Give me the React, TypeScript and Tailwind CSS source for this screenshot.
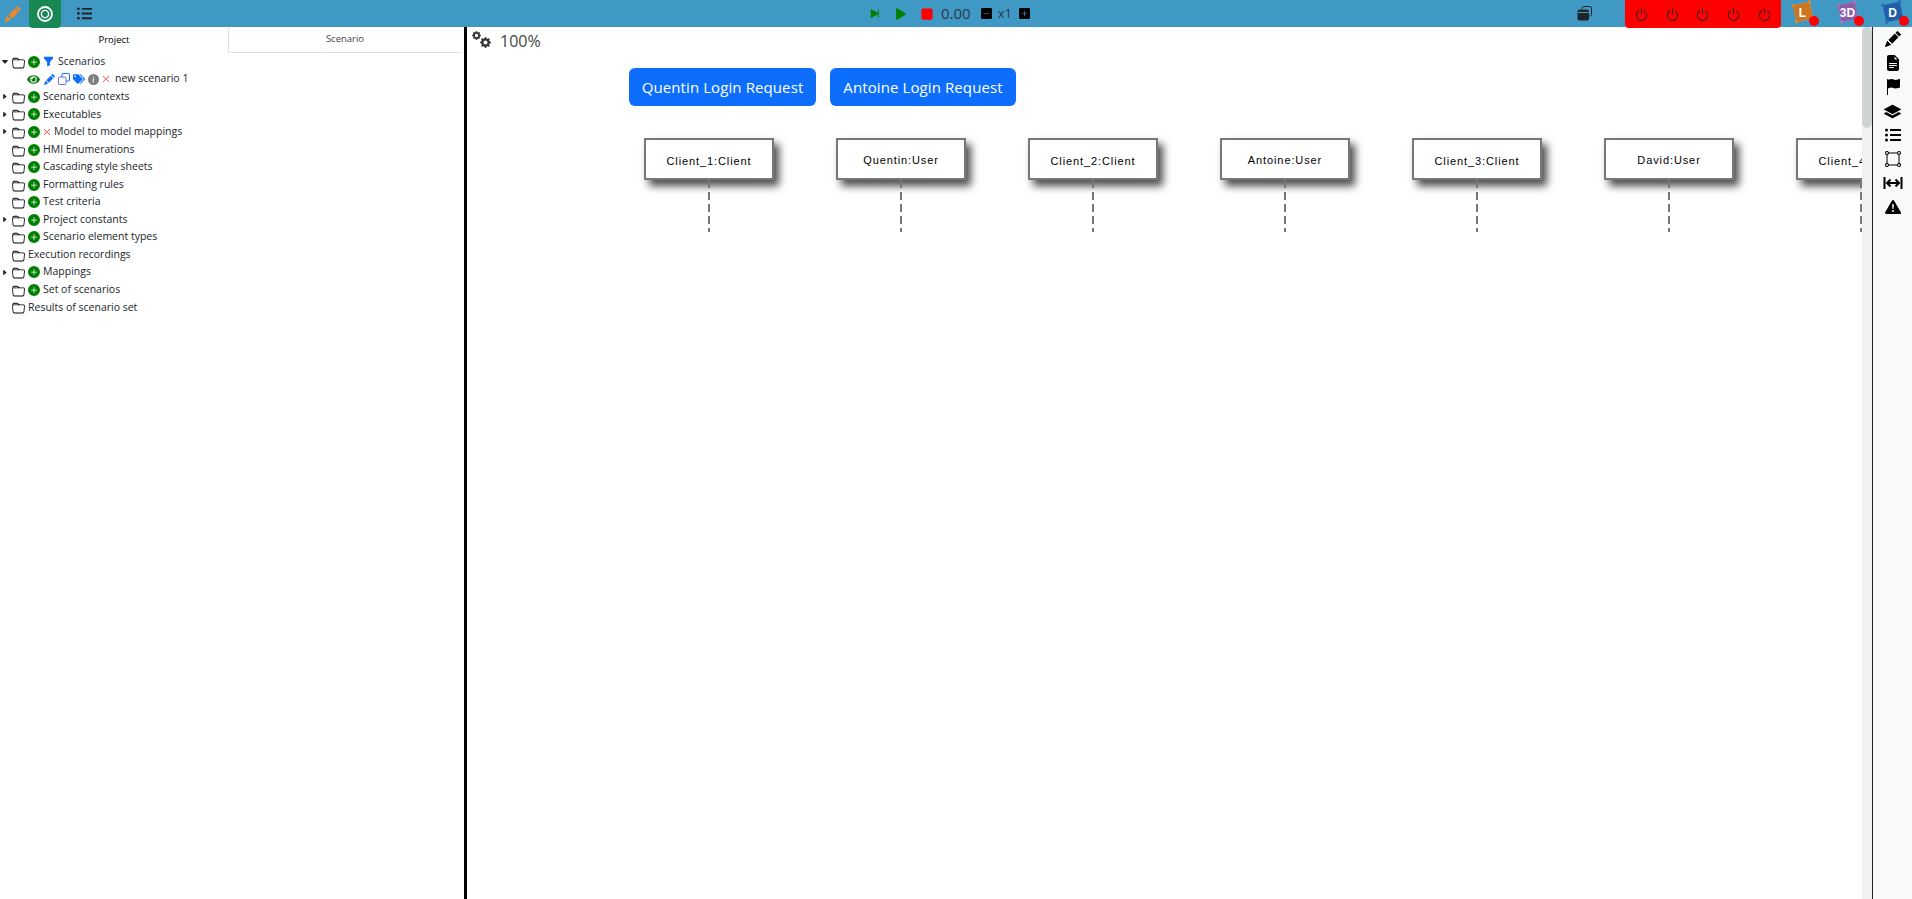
import React from 'react';
import {
  BsPencilFill, BsFolder, BsPlusCircleFill, BsCaretRightFill, BsCaretDownFill,
  BsInfoCircleFill, BsPower, BsFileEarmarkTextFill, BsFlagFill, BsLayersFill,
  BsBoundingBoxCircles, BsExclamationTriangleFill, BsDashSquareFill, BsPlusSquareFill,
  BsFunnelFill, BsPlayFill, BsSkipEndFill, BsStopFill, BsGearFill, BsXLg,
} from 'react-icons/bs';
import { FaEye, FaListUl, FaTags } from 'react-icons/fa';

const sans = { fontFamily: '"Open Sans", sans-serif' };

type TreeItem = {
  label: string;
  caret?: 'right' | 'down';
  plus?: boolean;
  cross?: boolean;
  filter?: boolean;
};

const treeTop: TreeItem[] = [{ label: 'Scenarios', caret: 'down', plus: true, filter: true }];

const treeRest: TreeItem[] = [
  { label: 'Scenario contexts', caret: 'right', plus: true },
  { label: 'Executables', caret: 'right', plus: true },
  { label: 'Model to model mappings', caret: 'right', plus: true, cross: true },
  { label: 'HMI Enumerations', plus: true },
  { label: 'Cascading style sheets', plus: true },
  { label: 'Formatting rules', plus: true },
  { label: 'Test criteria', plus: true },
  { label: 'Project constants', caret: 'right', plus: true },
  { label: 'Scenario element types', plus: true },
  { label: 'Execution recordings' },
  { label: 'Mappings', caret: 'right', plus: true },
  { label: 'Set of scenarios', plus: true },
  { label: 'Results of scenario set' },
];

const lifelines = [
  { name: 'Client_1:Client', user: false },
  { name: 'Quentin:User', user: true },
  { name: 'Client_2:Client', user: false },
  { name: 'Antoine:User', user: true },
  { name: 'Client_3:Client', user: false },
  { name: 'David:User', user: true },
  { name: 'Client_4:Client', user: false },
];

function TreeRow({ item }: { item: TreeItem }) {
  return (
    <div className="flex h-[17.55px] items-center whitespace-nowrap">
      <span className="flex w-[12px] shrink-0 items-center pl-px text-[#212529]">
        {item.caret === 'right' && <BsCaretRightFill size={7} />}
        {item.caret === 'down' && <BsCaretDownFill size={8} />}
      </span>
      <BsFolder size={13} className="mt-[3px] shrink-0 text-black" />
      {item.plus && <BsPlusCircleFill size={12} className="ml-[3px] shrink-0 text-[#008000]" />}
      {item.filter && <BsFunnelFill size={11} className="ml-[3px] shrink-0 text-[#0d6efd]" />}
      {item.cross && <BsXLg size={8} className="ml-[3px] shrink-0 text-[#ff0000]" />}
      <span className={item.filter ? 'ml-[4px]' : 'ml-[3px]'}>{item.label}</span>
    </div>
  );
}

function CopyIcon() {
  return (
    <svg width="12" height="12" viewBox="0 0 12 12" fill="none" className="ml-[3px] shrink-0">
      <rect x="4" y="0.5" width="7.5" height="7.5" rx="0.8" stroke="#0d6efd" />
      <rect x="0.5" y="4" width="7.5" height="7.5" rx="0.8" stroke="#6f6ff0" fill="#fff" />
    </svg>
  );
}

function ScenarioRow() {
  return (
    <div className="flex h-[17.55px] items-center whitespace-nowrap pl-[27px]">
      <FaEye size={13} className="shrink-0 text-[#0a7a0a]" />
      <BsPencilFill size={11} className="ml-[4px] shrink-0 text-[#0d6efd]" />
      <CopyIcon />
      <FaTags size={12} className="ml-[3px] shrink-0 text-[#0d6efd]" />
      <BsInfoCircleFill size={11} className="ml-[3px] shrink-0 text-[#7d7d7d]" />
      <BsXLg size={8} className="ml-[3px] shrink-0 text-[#ff0000]" />
      <span className="ml-[5px]">new scenario 1</span>
    </div>
  );
}

function ToolLogo({ label, fill, edge }: { label: string; fill: string; edge: string }) {
  return (
    <div className="relative flex h-[27px] w-[45px] items-center justify-center">
      <svg width="26" height="26" viewBox="0 0 26 26" className="absolute left-[9px] -top-[1px]">
        <g transform="rotate(-12 13 13)">
          <rect x="4.5" y="4.5" width="17" height="17" fill={fill} stroke={edge} strokeWidth="1" strokeDasharray="2 1" />
          <rect x="3" y="3" width="3" height="3" fill={edge} />
          <rect x="20" y="3" width="3" height="3" fill={edge} />
          <rect x="3" y="20" width="3" height="3" fill={edge} />
          <rect x="20" y="20" width="3" height="3" fill={edge} />
        </g>
      </svg>
      <span className="relative -ml-[2px] -mt-[2px] text-[12px] font-bold leading-none text-white" style={{ fontFamily: '"Liberation Sans", sans-serif' }}>
        {label}
      </span>
      <span className="absolute left-[28px] top-[16px] h-[10px] w-[10px] rounded-full bg-[#ff0000]" />
    </div>
  );
}

function TargetIcon() {
  return (
    <svg width="16" height="16" viewBox="0 0 16 16" fill="none" stroke="#fff">
      <circle cx="8" cy="8" r="7" strokeWidth="1.8" />
      <circle cx="8" cy="8" r="3.6" strokeWidth="1.4" />
    </svg>
  );
}

function StackIcon() {
  return (
    <svg width="15" height="15" viewBox="0 0 15 15" fill="none">
      <path d="M5 2.8V2a1.5 1.5 0 0 1 1.5-1.5H13A1.5 1.5 0 0 1 14.5 2v6.5A1.5 1.5 0 0 1 13 10h-.5" stroke="#212529" />
      <rect x="0.5" y="3.5" width="11.5" height="11" rx="2" fill="#212529" />
      <path d="M1 6.5h10.5" stroke="#4098c4" />
    </svg>
  );
}

function SpacingIcon() {
  return (
    <svg width="20" height="16" viewBox="0 0 20 16" fill="none" stroke="#000" strokeWidth="2">
      <path d="M1.5 2v12M18.5 2v12" />
      <path d="M4.5 8h11" />
      <path d="M7.5 4.5 4 8l3.5 3.5M12.5 4.5 16 8l-3.5 3.5" />
    </svg>
  );
}

function SideIcon({ children }: { children: React.ReactNode }) {
  return <div className="flex h-6 items-center justify-center text-black">{children}</div>;
}

export default function App() {
  return (
    <div className="flex h-screen w-full flex-col overflow-hidden bg-white text-[#212529]" style={sans}>
      {/* Top bar */}
      <div className="flex h-[27px] shrink-0 items-start bg-[#4098c4]">
        <div className="flex w-[870px] shrink-0 items-start">
          <div className="ml-[5px] flex h-[27px] items-center">
            <BsPencilFill size={16} className="text-[#e8892b]" />
          </div>
          <div className="ml-[8px] flex h-[28px] w-[32px] items-center justify-center rounded-b bg-[#198754]">
            <TargetIcon />
          </div>
          <div className="ml-[16px] flex h-[27px] items-center">
            <FaListUl size={15} className="text-[#212529]" />
          </div>
        </div>
        <div className="flex h-[27px] items-center">
          <BsSkipEndFill size={15} className="-ml-[3px] text-[#008000]" />
          <BsPlayFill size={20} className="ml-[9px] text-[#008000]" />
          <BsStopFill size={20} className="ml-[6px] text-[#ff0000]" />
          <span className="ml-[4px] text-[15px] text-[#2b3a4a]">0.00</span>
          <BsDashSquareFill size={11} className="ml-[10px] text-black" />
          <span className="ml-[6px] text-[13px] text-[#2b3a4a]">x1</span>
          <BsPlusSquareFill size={11} className="ml-[7px] text-black" />
        </div>
        <div className="-mr-[4px] ml-auto flex items-start">
          <div className="flex h-[27px] items-center">
            <StackIcon />
          </div>
          <div className="ml-[33px] flex h-[28px] w-[156px] items-center justify-around rounded-b bg-[#ff0000] px-[1px] text-[#212529]">
            <BsPower size={15} />
            <BsPower size={15} />
            <BsPower size={15} />
            <BsPower size={15} />
            <BsPower size={15} />
          </div>
          <ToolLogo label="L" fill="#c9761f" edge="#d98a35" />
          <ToolLogo label="3D" fill="#8d5ca6" edge="#a274b8" />
          <ToolLogo label="D" fill="#1f5fa8" edge="#2a6bb5" />
        </div>
      </div>

      <div className="flex min-h-0 flex-1">
        {/* Project tree */}
        <div className="w-[464px] shrink-0 text-[10.5px]">
          <div className="flex h-[26px] w-[461px]">
            <div className="flex w-[229px] items-center justify-center rounded-tr border-r border-[#dee2e6] text-[9.5px] text-black">
              Project
            </div>
            <div className="flex flex-1 items-center justify-center border-b border-[#dee2e6] text-[9.5px] text-[#444]">
              Scenario
            </div>
          </div>
          <div>
            {treeTop.map((item) => (
              <TreeRow key={item.label} item={item} />
            ))}
            <ScenarioRow />
            {treeRest.map((item) => (
              <TreeRow key={item.label} item={item} />
            ))}
          </div>
        </div>

        {/* Sequence canvas */}
        <div className="min-w-0 flex-1 overflow-hidden border-l-[3px] border-black">
          <div className="flex h-[27px] items-center pl-[5px]">
            <div className="flex w-[19px] items-start text-[#333]">
              <BsGearFill size={9} className="-mt-[3px]" />
              <BsGearFill size={11} className="-ml-px mt-[3px]" />
            </div>
            <span className="ml-[9px] text-[16px] text-[#444]">100%</span>
          </div>
          <div className="mt-[14px] flex gap-[14px] pl-[162px]">
            <button className="h-[38px] w-[187px] rounded-md bg-[#0d6efd] text-[15px] tracking-[0.1px] text-white">Quentin Login Request</button>
            <button className="h-[38px] w-[186px] rounded-md bg-[#0d6efd] text-[15px] tracking-[0.1px] text-white">Antoine Login Request</button>
          </div>
          <div className="mt-[32px] flex gap-[62px] pl-[177px]">
            {lifelines.map((l) => (
              <div key={l.name} className="flex w-[130px] shrink-0 flex-col items-center">
                <div
                  className={`flex h-[42px] w-[130px] items-center justify-center overflow-hidden whitespace-nowrap border-2 border-[#777] bg-white text-[11px] tracking-[0.9px] text-black shadow-[5px_6px_8px_rgba(0,0,0,0.7)] ${l.user ? 'pt-[3px]' : 'pt-[5px]'}`}
                  style={{ fontFamily: '"Liberation Sans", sans-serif' }}
                >
                  {l.name}
                </div>
                <svg width="2" height="52" className="relative z-10 block">
                  <line x1="1" y1="0" x2="1" y2="52" stroke="#777" strokeWidth="2" strokeDasharray="8 4" />
                </svg>
              </div>
            ))}
          </div>
        </div>

        {/* Fake scrollbar */}
        <div className="w-[10px] shrink-0 bg-[#f1f1f1]">
          <div className="h-[101px] rounded-full bg-[#d0d3d3]" />
        </div>

        {/* Right tool column */}
        <div className="w-[40px] shrink-0 border-l border-[#212529] bg-[#f8f9fa]">
          <SideIcon><BsPencilFill size={16} /></SideIcon>
          <SideIcon><BsFileEarmarkTextFill size={16} /></SideIcon>
          <SideIcon><BsFlagFill size={16} /></SideIcon>
          <SideIcon><BsLayersFill size={17} /></SideIcon>
          <SideIcon><FaListUl size={16} /></SideIcon>
          <SideIcon><BsBoundingBoxCircles size={16} /></SideIcon>
          <SideIcon><SpacingIcon /></SideIcon>
          <SideIcon><BsExclamationTriangleFill size={16} /></SideIcon>
        </div>
      </div>
    </div>
  );
}
